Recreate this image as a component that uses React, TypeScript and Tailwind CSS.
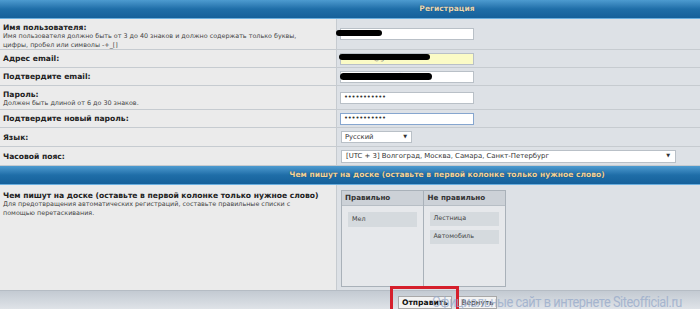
import { ReactNode } from 'react';

const font = "font-['DejaVu_Sans',Verdana,sans-serif]";

function Row({ h, label, desc, children }: { h: string; label: string; desc?: string[]; children?: ReactNode }) {
  return (
    <div className={`flex border-b border-[#c6cbd0] ${h}`}>
      <div className={`w-[337px] shrink-0 bg-[#ebebeb] pl-[3px] border-r border-[#c6cbd0] flex flex-col ${desc ? 'pt-[4px]' : 'justify-center'}`}>
        <div className="text-[7.6px] font-bold leading-[9px] text-[#222]">{label}</div>
        {desc && desc.map((d) => (
          <div key={d} className="text-[6.4px] leading-[9px] text-[#444]">{d}</div>
        ))}
      </div>
      <div className="flex-1 bg-[#dde1e6] pl-[3px] flex items-center relative">{children}</div>
    </div>
  );
}

function Field({ value, bg = 'bg-white', border = 'border-[#b9c0c7]', pw = false }: { value: string; bg?: string; border?: string; pw?: boolean }) {
  return (
    <div className={`w-[134px] h-[12px] border ${border} ${bg} pl-[3px] flex items-center text-[6.8px] text-[#333] ${pw ? 'tracking-[-0.2px]' : 'text-[#777]'}`}>
      {value}
    </div>
  );
}

function Blob({ className }: { className: string }) {
  return <div className={`absolute bg-black rounded-full ${className}`} />;
}

function Header({ title, color }: { title: string; color: string }) {
  return (
    <div className="h-[19px] bg-gradient-to-b from-[#4d9bd0] via-[#1f6ea8] to-[#15609a] border-b border-[#6aaede] flex items-center justify-center pl-[194px]">
      <span className={`text-[7.6px] font-bold ${color} [text-shadow:0_0_1px_#0b3e66]`}>{title}</span>
    </div>
  );
}

export default function App() {
  return (
    <div className={`w-[700px] h-[309px] overflow-hidden bg-[#dde1e6] ${font} relative`}>
      <Header title="Регистрация" color="text-[#e6d7b4]" />

      <Row
        h="h-[31px]"
        label="Имя пользователя:"
        desc={['Имя пользователя должно быть от 3 до 40 знаков и должно содержать только буквы,', 'цифры, пробел или символы -+_[]']}
      >
        <Field value="aaaaaa" />
        <Blob className="left-[-1px] top-[11px] w-[46px] h-[6px]" />
      </Row>
      <Row h="h-[18px]" label="Адрес email:">
        <Field value="aaaaaaa@gmail.com" bg="bg-[#fbfbc6]" />
        <Blob className="left-[2px] top-[4px] w-[91px] h-[6px]" />
      </Row>
      <Row h="h-[18px]" label="Подтвердите email:">
        <Field value="aaaaaaaa@gmail.com" />
        <Blob className="left-[3px] top-[5px] w-[92px] h-[7px]" />
      </Row>
      <Row h="h-[24px]" label="Пароль:" desc={['Должен быть длиной от 6 до 30 знаков.']}>
        <Field value="•••••••••••" pw />
      </Row>
      <Row h="h-[18px]" label="Подтвердите новый пароль:">
        <Field value="•••••••••••" border="border-[#86a6cf]" pw />
      </Row>
      <Row h="h-[19px]" label="Язык:">
        <div className="ml-[1px] w-[71px] h-[12px] border border-[#b9c0c7] bg-white pl-[3px] pr-[4px] flex items-center justify-between text-[6.8px] text-[#333]">
          <span>Русский</span>
          <span className="text-[5px]">▼</span>
        </div>
      </Row>
      <Row h="h-[19px]" label="Часовой пояс:">
        <div className="ml-[1px] w-[335px] h-[13px] border border-[#b9c0c7] bg-white pl-[4px] pr-[5px] flex items-center justify-between text-[6.9px] text-[#333]">
          <span>[UTC + 3] Волгоград, Москва, Самара, Санкт-Петербург</span>
          <span className="text-[5px]">▼</span>
        </div>
      </Row>

      <Header title="Чем пишут на доске (оставьте в первой колонке только нужное слово)" color="text-[#f2d39a]" />

      <div className="flex h-[105px]">
        <div className="w-[337px] shrink-0 bg-[#ebebeb] pl-[3px] pt-[6px] border-r border-[#c6cbd0]">
          <div className="text-[7.6px] font-bold leading-[9px] text-[#222]">Чем пишут на доске (оставьте в первой колонке только нужное слово)</div>
          <div className="text-[6.4px] leading-[9px] text-[#444]">Для предотвращения автоматических регистраций, составьте правильные списки с</div>
          <div className="text-[6.4px] leading-[8px] text-[#444]">помощью перетаскивания.</div>
        </div>
        <div className="flex-1 bg-[#dde1e6] pl-[4px] pt-[5px]">
          <div className="w-[165px] h-[97px] border border-[#a9b1b9] bg-[#e6e8eb] grid grid-cols-2">
            <div className="border-r border-[#a9b1b9] flex flex-col">
              <div className="h-[15px] bg-[#ccd1d7] border-b border-[#b7bec5] pl-[3px] flex items-center text-[7.2px] font-bold text-[#333]">Правильно</div>
              <div className="pl-[6px] pt-[6px]">
                <div className="w-[69px] h-[15px] bg-[#d5dade] pl-[4px] flex items-center text-[6.4px] text-[#444]">Мел</div>
              </div>
            </div>
            <div className="flex flex-col">
              <div className="h-[15px] bg-[#ccd1d7] border-b border-[#b7bec5] pl-[4px] flex items-center text-[7.2px] font-bold text-[#333]">Не правильно</div>
              <div className="pl-[6px] pt-[6px] flex flex-col gap-[4px]">
                <div className="w-[69px] h-[14px] bg-[#d5dade] pl-[4px] flex items-center text-[6.4px] text-[#444]">Лестница</div>
                <div className="w-[69px] h-[14px] bg-[#d5dade] pl-[4px] flex items-center text-[6.4px] text-[#444]">Автомобиль</div>
              </div>
            </div>
          </div>
        </div>
      </div>

      <div className="h-[19px] bg-gradient-to-b from-[#c3cad2] to-[#dfe3e8] border-t border-[#b5bcc4] flex items-end pl-[398px] gap-[6px] relative">
        <div className="relative">
          <div className="w-[54px] h-[13px] bg-[#f3f3f3] border border-[#a9a9a9] flex items-center justify-center text-[7.6px] font-bold text-[#111]">Отправить</div>
          <div className="absolute left-[-8px] top-[-10px] w-[69px] h-[26px] border-[3px] border-[#d51f2b]" />
        </div>
        <div className="w-[39px] h-[13px] bg-[#f3f3f3] border border-[#a9a9a9] flex items-center justify-center text-[7.4px] text-[#222]">Вернуть</div>
        <div className="absolute left-[432px] top-[3px] text-[15px] leading-[16px] tracking-[-0.5px] font-['Roboto',sans-serif] text-[#9aaccb] opacity-80 whitespace-nowrap scale-x-[0.85] origin-left">
          Официальные сайт в интернете Siteofficial.ru
        </div>
      </div>
    </div>
  );
}
